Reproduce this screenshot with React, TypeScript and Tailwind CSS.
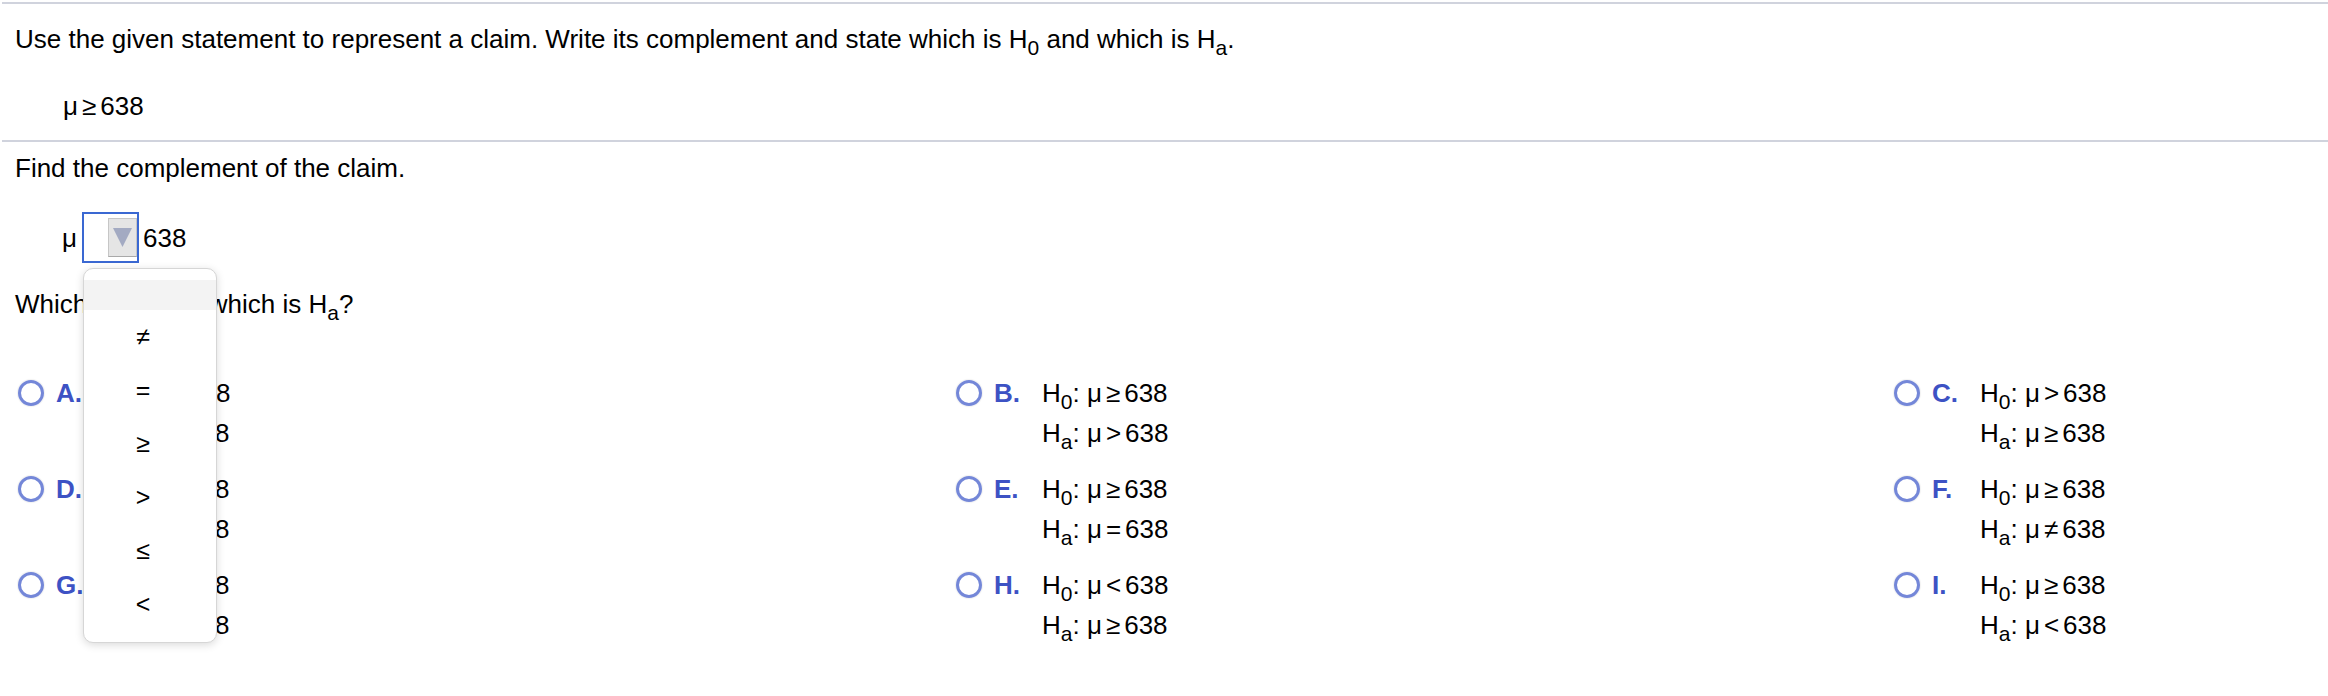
import type { ReactNode } from 'react'

function Sub({ children }: { children: ReactNode }) {
  return <span className="relative top-[7px] text-[21px] leading-none">{children}</span>
}

function Rel({ op }: { op: string }) {
  return (
    <>
      μ<span className="mx-[4px]">{op}</span>638
    </>
  )
}

interface OptionProps {
  label: string
  h0: string
  ha: string
}

const options: OptionProps[] = [
  { label: 'A.', h0: '=', ha: '≥' },
  { label: 'B.', h0: '≥', ha: '>' },
  { label: 'C.', h0: '>', ha: '≥' },
  { label: 'D.', h0: '≥', ha: '≤' },
  { label: 'E.', h0: '≥', ha: '=' },
  { label: 'F.', h0: '≥', ha: '≠' },
  { label: 'G.', h0: '≤', ha: '≥' },
  { label: 'H.', h0: '<', ha: '≥' },
  { label: 'I.', h0: '≥', ha: '<' },
]

const menuItems = ['≠', '=', '≥', '>', '≤', '<']

function Choice({ label, h0, ha }: OptionProps) {
  return (
    <div className="flex items-start h-[80px]">
      <div className="h-[40px] flex items-center">
        <span className="w-[26px] h-[26px] rounded-full border-[3px] border-[#7487d8] shadow-[0_0_1px_1px_rgba(0,0,0,0.06)]" />
      </div>
      <span className="ml-[12px] w-[48px] leading-[40px] font-bold text-[#3d52c4]">{label}</span>
      <div className="leading-[40px]">
        <div className="h-[40px]">
          H<Sub>0</Sub>: <Rel op={h0} />
        </div>
        <div className="h-[40px]">
          H<Sub>a</Sub>: <Rel op={ha} />
        </div>
      </div>
    </div>
  )
}

export default function App() {
  return (
    <div className="relative min-h-[696px] bg-white text-black text-[26px] font-['Liberation_Sans',Arial,sans-serif]">
      {/* top rule */}
      <div className="ml-[2px] pt-[2px]">
        <div className="h-[2px] bg-[#d0d3dd]" />
      </div>

      <p className="mt-[20px] pl-[15px] leading-[30px]">
        Use the given statement to represent a claim. Write its complement and state which is H<Sub>0</Sub> and which
        is H<Sub>a</Sub>.
      </p>

      <p className="mt-[37px] pl-[63px] leading-[30px]">
        <Rel op="≥" />
      </p>

      <div className="ml-[2px] mt-[19px] h-[2px] bg-[#d0d3dd]" />

      <p className="mt-[11px] pl-[15px] leading-[30px]">Find the complement of the claim.</p>

      {/* select row */}
      <div className="mt-[29px] pl-[62px] h-[51px] flex items-center">
        <span className="leading-[30px]">μ</span>
        <div className="ml-[5px] w-[57px] h-[51px] border-2 border-[#3a68d2] flex items-center justify-end">
          <div className="w-[29px] h-[39px] bg-[#e5e5e5] border border-[#c6c6c6] border-b-[#a9a9a9] flex items-center justify-center">
            <svg width="19" height="19" viewBox="0 0 19 19">
              <polygon points="0,0 19,0 9.5,19" fill="#a3aac2" />
            </svg>
          </div>
        </div>
        <span className="ml-[4px] leading-[30px]">638</span>
      </div>

      <p className="mt-[26px] pl-[15px] leading-[30px] h-[30px]">
        Which is H<Sub>0</Sub> and which is H<Sub>a</Sub>?
      </p>

      {/* answer choices */}
      <div className="mt-[54px] pl-[18px] grid grid-cols-[938px_938px_1fr] gap-y-[16px]">
        {options.map((o) => (
          <Choice key={o.label} {...o} />
        ))}
      </div>

      {/* open dropdown menu */}
      <div className="absolute left-[83px] top-[268px] w-[134px] h-[375px] rounded-[10px] border border-[#d6d6d6] bg-white shadow-[0_2px_8px_rgba(0,0,0,0.15)] pt-[11px] overflow-hidden">
        <div className="h-[30px] bg-[#f3f3f3]" />
        {menuItems.map((m) => (
          <div key={m} className="h-[53.5px] flex items-center justify-center pr-[14px] text-[25px]">
            {m}
          </div>
        ))}
      </div>
    </div>
  )
}
